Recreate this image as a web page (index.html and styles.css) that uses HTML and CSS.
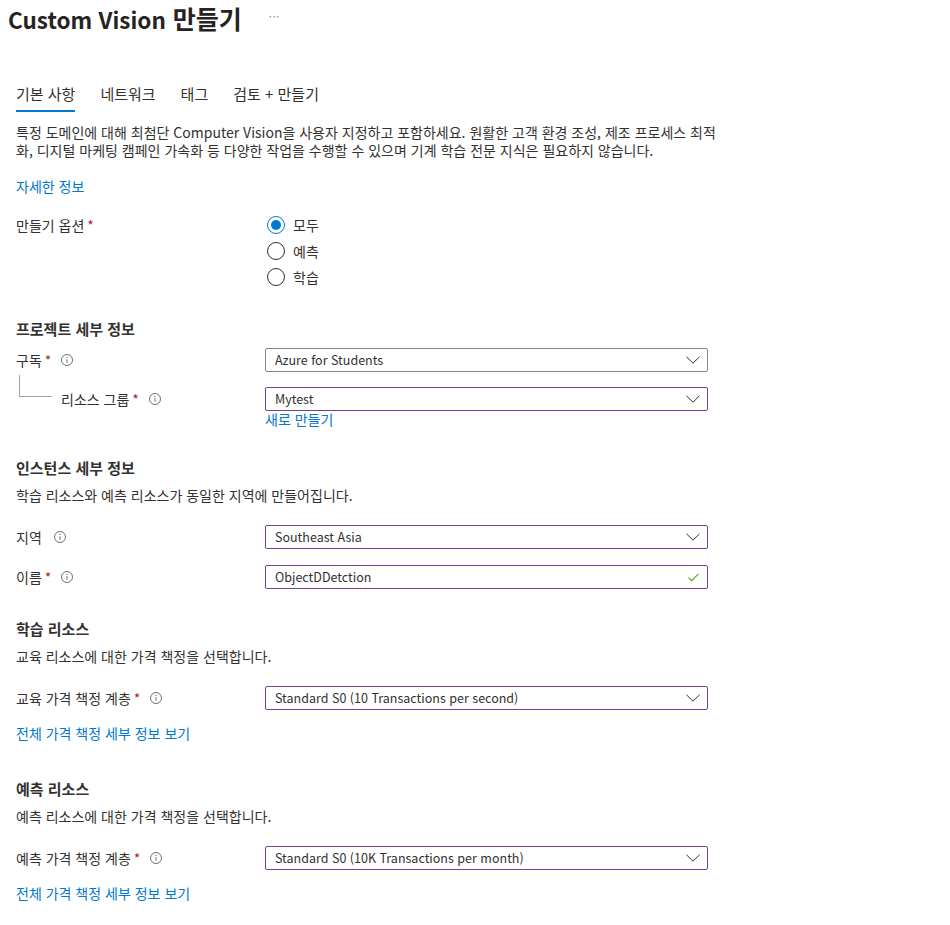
FILE: index.html
```html
<!DOCTYPE html>
<html lang="ko">
<head>
<meta charset="utf-8">
<title>Custom Vision 만들기</title>
<link rel="stylesheet" href="styles.css">
</head>
<body>
<header class="title-bar">
  <h1 class="title"><span class="title-latin">Custom Vision</span> 만들기</h1>
  <span class="more">···</span>
</header>
<nav class="tabs">
  <span class="tab active">기본 사항</span>
  <span class="tab">네트워크</span>
  <span class="tab">태그</span>
  <span class="tab">검토 + 만들기</span>
</nav>
<main class="content">
  <p class="intro">특정 도메인에 대해 최첨단 Computer Vision을 사용자 지정하고 포함하세요. 원활한 고객 환경 조성, 제조 프로세스 최적<br>화, 디지털 마케팅 캠페인 가속화 등 다양한 작업을 수행할 수 있으며 기계 학습 전문 지식은 필요하지 않습니다.</p>
  <a class="link more-info">자세한 정보</a>

  <div class="row row-radio">
    <div class="label">만들기 옵션<span class="req">*</span></div>
    <div class="radios">
      <div class="radio checked"><span class="circle"></span>모두</div>
      <div class="radio"><span class="circle"></span>예측</div>
      <div class="radio"><span class="circle"></span>학습</div>
    </div>
  </div>

  <h2 class="heading h-project">프로젝트 세부 정보</h2>
  <div class="row row-sub">
    <div class="label">구독<span class="req">*</span><svg class="info" viewBox="0 0 12 12"><circle cx="6" cy="6" r="5.5"/><line x1="6" y1="5.2" x2="6" y2="8.8"/><circle class="dot" cx="6" cy="3.4" r="0.6"/></svg></div>
    <div class="select neutral"><span>Azure for Students</span><svg class="chev" viewBox="0 0 14 8"><path d="M0.5 0.8 L7 7.2 L13.5 0.8"/></svg></div>
  </div>
  <div class="row row-rg">
    <div class="label child">리소스 그룹<span class="req">*</span><svg class="info" viewBox="0 0 12 12"><circle cx="6" cy="6" r="5.5"/><line x1="6" y1="5.2" x2="6" y2="8.8"/><circle class="dot" cx="6" cy="3.4" r="0.6"/></svg></div>
    <div class="select"><span>Mytest</span><svg class="chev" viewBox="0 0 14 8"><path d="M0.5 0.8 L7 7.2 L13.5 0.8"/></svg></div>
  </div>
  <div class="row">
    <div></div>
    <a class="link new-link">새로 만들기</a>
  </div>

  <h2 class="heading h-instance">인스턴스 세부 정보</h2>
  <p class="desc">학습 리소스와 예측 리소스가 동일한 지역에 만들어집니다.</p>
  <div class="row row-first">
    <div class="label">지역<svg class="info no-req" viewBox="0 0 12 12"><circle cx="6" cy="6" r="5.5"/><line x1="6" y1="5.2" x2="6" y2="8.8"/><circle class="dot" cx="6" cy="3.4" r="0.6"/></svg></div>
    <div class="select"><span>Southeast Asia</span><svg class="chev" viewBox="0 0 14 8"><path d="M0.5 0.8 L7 7.2 L13.5 0.8"/></svg></div>
  </div>
  <div class="row row-next">
    <div class="label">이름<span class="req">*</span><svg class="info" viewBox="0 0 12 12"><circle cx="6" cy="6" r="5.5"/><line x1="6" y1="5.2" x2="6" y2="8.8"/><circle class="dot" cx="6" cy="3.4" r="0.6"/></svg></div>
    <div class="select"><span>ObjectDDetction</span><svg class="check" viewBox="0 0 12 9"><path d="M0.6 4.6 L4 8 L11.4 0.6"/></svg></div>
  </div>

  <h2 class="heading h-section">학습 리소스</h2>
  <p class="desc">교육 리소스에 대한 가격 책정을 선택합니다.</p>
  <div class="row row-first">
    <div class="label">교육 가격 책정 계층<span class="req">*</span><svg class="info" viewBox="0 0 12 12"><circle cx="6" cy="6" r="5.5"/><line x1="6" y1="5.2" x2="6" y2="8.8"/><circle class="dot" cx="6" cy="3.4" r="0.6"/></svg></div>
    <div class="select"><span>Standard S0 (10 Transactions per second)</span><svg class="chev" viewBox="0 0 14 8"><path d="M0.5 0.8 L7 7.2 L13.5 0.8"/></svg></div>
  </div>
  <a class="link price-link">전체 가격 책정 세부 정보 보기</a>

  <h2 class="heading h-section2">예측 리소스</h2>
  <p class="desc">예측 리소스에 대한 가격 책정을 선택합니다.</p>
  <div class="row row-first">
    <div class="label">예측 가격 책정 계층<span class="req">*</span><svg class="info" viewBox="0 0 12 12"><circle cx="6" cy="6" r="5.5"/><line x1="6" y1="5.2" x2="6" y2="8.8"/><circle class="dot" cx="6" cy="3.4" r="0.6"/></svg></div>
    <div class="select"><span>Standard S0 (10K Transactions per month)</span><svg class="chev" viewBox="0 0 14 8"><path d="M0.5 0.8 L7 7.2 L13.5 0.8"/></svg></div>
  </div>
  <a class="link price-link">전체 가격 책정 세부 정보 보기</a>
</main>
</body>
</html>
```

FILE: styles.css
```css
* { box-sizing: border-box; }

body {
  margin: 0;
  background: #ffffff;
  color: #323130;
  font-family: "Noto Sans CJK KR", "Noto Sans", sans-serif;
  font-size: 14px;
}

.title-bar {
  display: flex;
  align-items: flex-start;
  height: 32px;
  padding: 4px 0 0 8px;
}

.title {
  margin: 0;
  font-size: 25px;
  font-weight: 600;
  line-height: 28px;
  color: #252423;
}

.title-latin {
  font-size: 22.5px;
}

.more {
  margin: 6px 0 0 27px;
  font-size: 11px;
  line-height: 12px;
  color: #8a8886;
  letter-spacing: 0.5px;
}

.tabs {
  display: flex;
  gap: 25px;
  margin-top: 52px;
  padding-left: 16px;
}

.tab {
  font-size: 15px;
  line-height: 20px;
  padding-bottom: 6px;
  border-bottom: 2px solid transparent;
  color: #323130;
}

.tab.active {
  border-bottom-color: #0078d4;
}

.content {
  width: 708px;
  padding-left: 16px;
}

.intro {
  margin: 11px -60px 0 0;
  line-height: 18px;
}

.link {
  display: block;
  color: #0078d4;
  line-height: 18px;
  cursor: pointer;
}

.more-info { margin-top: 18px; }

.row {
  display: grid;
  grid-template-columns: 249px 443px;
  align-items: center;
}

.row-radio {
  margin-top: 17px;
  align-items: start;
}

.row-radio .label { line-height: 26px; }

.radios {
  display: flex;
  flex-direction: column;
}

.radio {
  display: flex;
  align-items: center;
  height: 26px;
  gap: 8px;
  padding-left: 2px;
}

.circle {
  width: 18px;
  height: 18px;
  border: 1px solid #323130;
  border-radius: 50%;
  display: flex;
  align-items: center;
  justify-content: center;
}

.radio.checked .circle {
  border-color: #0078d4;
}

.radio.checked .circle::after {
  content: "";
  width: 10px;
  height: 10px;
  border-radius: 50%;
  background: #0078d4;
}

.heading {
  margin: 0;
  font-size: 15px;
  font-weight: 600;
  line-height: 20px;
}

.h-project { margin-top: 29px; }
.h-instance { margin-top: 31px; }
.h-section { margin-top: 30px; }
.h-section2 { margin-top: 37px; }

.desc {
  margin: 8px 0 0;
  line-height: 18px;
}

.label {
  display: flex;
  align-items: center;
  line-height: 18px;
}

.label.child {
  position: relative;
  padding-left: 45px;
}

.label.child::before {
  content: "";
  position: absolute;
  left: 3px;
  top: -15px;
  width: 32px;
  height: 21px;
  border-left: 1px solid #a19f9d;
  border-bottom: 1px solid #a19f9d;
}

.req {
  color: #a4262c;
  margin-left: 3px;
}

.info {
  width: 12px;
  height: 12px;
  margin-left: 10px;
  fill: none;
  stroke: #605e5c;
  stroke-width: 0.9;
}

.info.no-req { margin-left: 12px; }

.info .dot {
  fill: #605e5c;
  stroke: none;
}

.row-sub { margin-top: 9px; }
.row-rg { margin-top: 15px; }
.row-first { margin-top: 21px; }
.row-next { margin-top: 16px; }

.select {
  display: flex;
  align-items: center;
  justify-content: space-between;
  height: 24px;
  padding: 0 7px 0 9px;
  border: 1px solid #7a3e8e;
  border-radius: 2px;
  background: #fff;
}

.select.neutral { border-color: #8a8886; }

.select span {
  font-size: 12.5px;
  line-height: 18px;
}

.chev {
  width: 14px;
  height: 8px;
  fill: none;
  stroke: #323130;
  stroke-width: 1;
}

.check {
  width: 11px;
  height: 9px;
  margin-right: 1px;
  fill: none;
  stroke: #57a300;
  stroke-width: 1.1;
}

.new-link { line-height: 16px; }

.price-link { margin-top: 14px; }
```
